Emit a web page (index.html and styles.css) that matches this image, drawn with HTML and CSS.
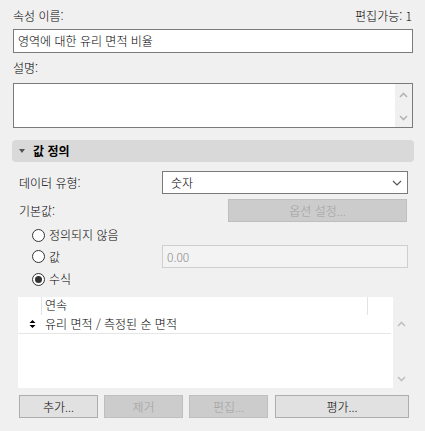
FILE: index.html
```html
<!DOCTYPE html>
<html lang="ko">
<head>
<meta charset="utf-8">
<link rel="stylesheet" href="styles.css">
</head>
<body>
<div class="page">
  <div class="row-top">
    <span class="label">속성 이름:</span>
    <span class="label">편집가능: 1</span>
  </div>
  <div class="textbox">영역에 대한 유리 면적 비율</div>
  <div class="row-label"><span class="label">설명:</span></div>
  <div class="textarea">
    <div class="ta-body"></div>
    <div class="ta-scroll">
      <svg width="9" height="6" viewBox="0 0 9 6"><path d="M1 5 L4.5 1.5 L8 5" fill="none" stroke="#b4b4b4" stroke-width="1.6"/></svg>
      <svg width="9" height="6" viewBox="0 0 9 6"><path d="M1 1 L4.5 4.5 L8 1" fill="none" stroke="#b4b4b4" stroke-width="1.6"/></svg>
    </div>
  </div>

  <div class="section">
    <svg class="tri" width="6" height="4" viewBox="0 0 6 4"><path d="M0 0 H6 L3 4 Z" fill="#555"/></svg>
    <span class="section-title">값 정의</span>
  </div>

  <div class="form-row row-data">
    <span class="label">데이터 유형:</span>
    <div class="select">
      <span>숫자</span>
      <svg width="10" height="6" viewBox="0 0 10 6"><path d="M1 1 L5 5 L9 1" fill="none" stroke="#555" stroke-width="1.2"/></svg>
    </div>
  </div>
  <div class="form-row row-default">
    <span class="label">기본값:</span>
    <div class="btn btn-disabled btn-options">옵션 설정...</div>
  </div>
  <div class="radio-row r1">
    <span class="radio"></span><span class="label">정의되지 않음</span>
  </div>
  <div class="radio-row r2">
    <span class="radio"></span><span class="label">값</span>
    <div class="value-input">0.00</div>
  </div>
  <div class="radio-row r3">
    <span class="radio checked"></span><span class="label">수식</span>
  </div>

  <div class="table-wrap">
    <div class="table">
      <div class="thead">
        <div class="th th-icon"></div>
        <div class="th th-main">연속</div>
        <div class="th th-end"></div>
      </div>
      <div class="trow">
        <div class="td-icon">
          <svg width="7" height="10" viewBox="0 0 7 10"><path d="M0.5 4 L3.5 1 L6.5 4 Z M0.5 6 L3.5 9 L6.5 6 Z" fill="#000"/></svg>
        </div>
        <div class="td-main">유리 면적 / 측정된 순 면적</div>
      </div>
    </div>
    <div class="table-scroll">
      <svg width="9" height="6" viewBox="0 0 9 6"><path d="M1 5 L4.5 1.5 L8 5" fill="none" stroke="#c0c0c0" stroke-width="1.6"/></svg>
      <svg width="9" height="6" viewBox="0 0 9 6"><path d="M1 1 L4.5 4.5 L8 1" fill="none" stroke="#c0c0c0" stroke-width="1.6"/></svg>
    </div>
  </div>

  <div class="buttons">
    <div class="btn btn-small">추가...</div>
    <div class="btn btn-small btn-disabled">제거</div>
    <div class="btn btn-small btn-disabled">편집...</div>
    <div class="btn btn-wide">평가...</div>
  </div>
</div>
</body>
</html>
```
FILE: styles.css
```css
* { box-sizing: border-box; }
html, body {
  margin: 0;
  padding: 0;
  background: #f0f0f0;
}
body {
  font-family: "Noto Sans CJK KR", "Noto Sans", sans-serif;
  font-size: 12px;
  font-weight: 300;
  line-height: 16px;
  color: #000;
}
.page {
  width: 425px;
  height: 431px;
  padding: 8px 12px 0 13px;
  display: flex;
  flex-direction: column;
}
.label { white-space: nowrap; }
.row-top {
  height: 16px;
  display: flex;
  justify-content: space-between;
  align-items: center;
  padding-right: 1px;
}
.textbox {
  margin-top: 5px;
  height: 24px;
  border: 1px solid #7a7a7a;
  background: #fff;
  padding: 0 4px;
  display: flex;
  align-items: center;
}
.row-label {
  margin-top: 7px;
  height: 16px;
  display: flex;
  align-items: center;
}
.textarea {
  margin-top: 7px;
  height: 45px;
  border: 1px solid #7a7a7a;
  background: #fff;
  display: flex;
}
.ta-body { flex: 1; }
.ta-scroll {
  width: 17px;
  background: #f0f0f0;
  display: flex;
  flex-direction: column;
  justify-content: space-between;
  align-items: center;
  padding: 8px 0 6px;
}
.section {
  margin-top: 12px;
  margin-left: -1px;
  margin-right: -1px;
  height: 22px;
  background: #d9d9d9;
  border-radius: 4px;
  display: flex;
  align-items: center;
  padding-left: 7px;
}
.tri { margin-right: 8px; }
.section-title { font-weight: bold; }
.form-row {
  display: flex;
  align-items: center;
  justify-content: space-between;
  padding-left: 6px;
}
.row-data { margin-top: 9px; height: 23px; }
.select {
  width: 246px;
  height: 23px;
  margin-right: 5px;
  border: 1px solid #7a7a7a;
  background: #fff;
  display: flex;
  align-items: center;
  justify-content: space-between;
  padding: 0 5px 0 8px;
}
.row-default { margin-top: 5px; height: 23px; }
.btn {
  height: 23px;
  border: 1px solid #adadad;
  background: #e1e1e1;
  display: flex;
  align-items: center;
  justify-content: center;
}
.btn-disabled {
  background: #cccccc;
  border-color: #bfbfbf;
  color: #a0a0a0;
}
.btn-options { width: 179px; margin-right: 6px; }
.radio-row {
  display: flex;
  align-items: center;
  padding-left: 19px;
}
.r1 { margin-top: 5px; height: 16px; }
.r2 { margin-top: 2px; height: 23px; }
.r3 { margin-top: 3px; height: 16px; }
.radio {
  width: 13px;
  height: 13px;
  border: 1px solid #333;
  border-radius: 50%;
  background: #fff;
  margin-right: 4px;
  display: flex;
  align-items: center;
  justify-content: center;
  flex: none;
}
.radio.checked::after {
  content: "";
  width: 7px;
  height: 7px;
  border-radius: 50%;
  background: #333;
}
.value-input {
  margin-left: auto;
  margin-right: 5px;
  width: 246px;
  height: 23px;
  border: 1px solid #cfcfcf;
  background: #f3f3f3;
  color: #8a8a8a;
  display: flex;
  align-items: center;
  padding-left: 4px;
}
.table-wrap {
  margin-top: 10px;
  margin-left: 5px;
  height: 91px;
  display: flex;
}
.table {
  width: 375px;
  background: #fff;
  display: flex;
  flex-direction: column;
}
.thead {
  height: 18px;
  display: flex;
  margin-right: 2px;
}
.th { height: 18px; }
.th-icon { width: 24px; border-right: 1px solid #e3e3e3; }
.th-main { flex: 1; padding-left: 3px; line-height: 16px; }
.th-end { width: 24px; border-left: 1px solid #e3e3e3; }
.trow {
  height: 19px;
  display: flex;
  align-items: center;
  border-bottom: 1px solid #e6e6e6;
  margin-right: 2px;
}
.td-icon {
  width: 27px;
  display: flex;
  justify-content: center;
  padding-left: 1px;
}
.td-main { padding-left: 0; }
.table-scroll {
  width: 17px;
  display: flex;
  flex-direction: column;
  justify-content: space-between;
  align-items: center;
  padding: 24px 0 6px;
}
.buttons {
  margin-top: 7px;
  padding-left: 6px;
  display: flex;
  gap: 6px;
}
.btn-small { width: 79px; }
.btn-wide { width: 134px; margin-left: 1px; }
```
